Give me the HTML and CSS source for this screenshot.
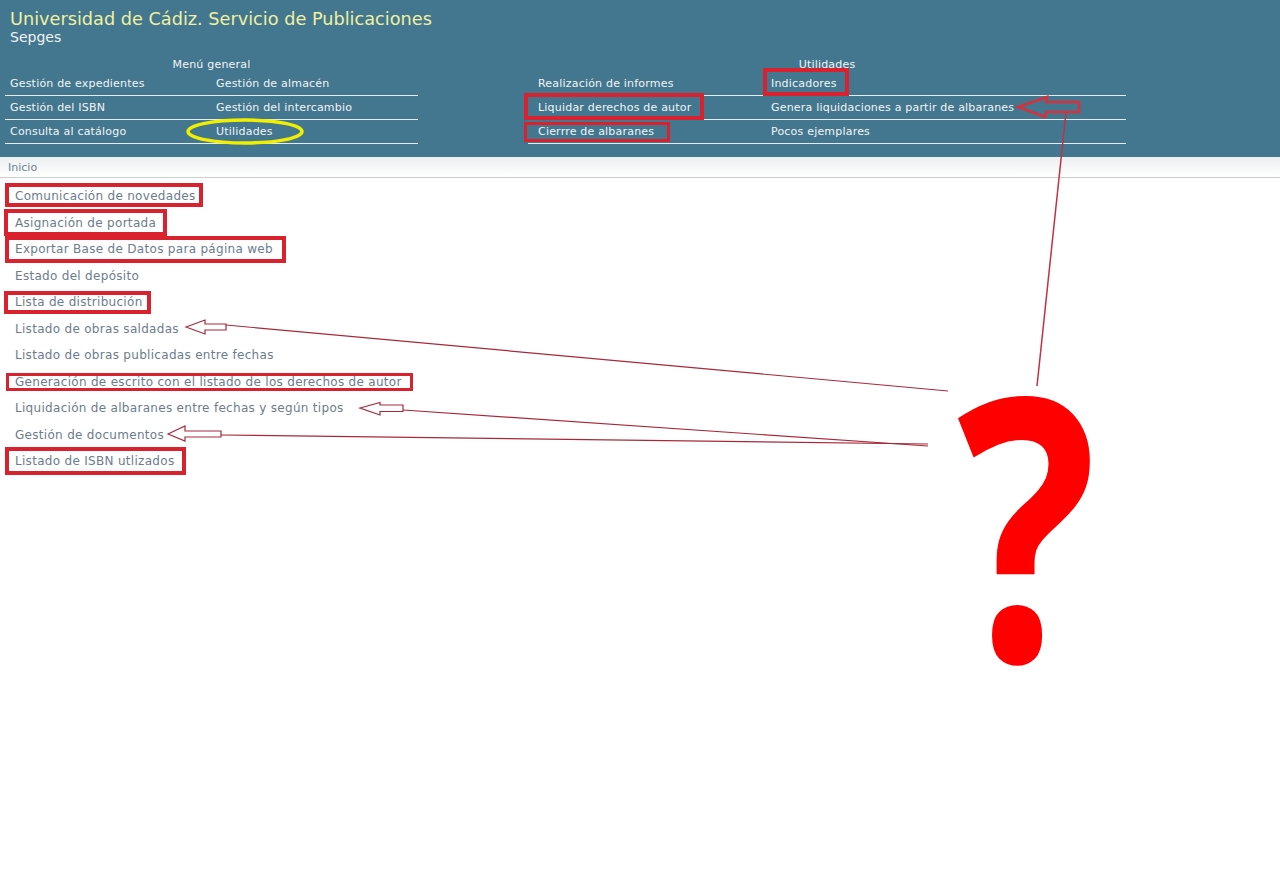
FILE: index.html
```html
<!DOCTYPE html>
<html lang="es">
<head>
<meta charset="utf-8">
<title>Sepges</title>
<link rel="stylesheet" href="styles.css">
</head>
<body>
<header class="top">
  <div class="title">Universidad de Cádiz. Servicio de Publicaciones</div>
  <div class="subtitle">Sepges</div>
  <div class="menus">
    <nav class="menu menu-left">
      <div class="menu-head">Menú general</div>
      <div class="cell">Gestión de expedientes</div>
      <div class="cell">Gestión de almacén</div>
      <div class="cell">Gestión del ISBN</div>
      <div class="cell">Gestión del intercambio</div>
      <div class="cell">Consulta al catálogo</div>
      <div class="cell">Utilidades</div>
    </nav>
    <nav class="menu menu-right">
      <div class="menu-head">Utilidades</div>
      <div class="cell">Realización de informes</div>
      <div class="cell">Indicadores</div>
      <div class="cell">Liquidar derechos de autor</div>
      <div class="cell">Genera liquidaciones a partir de albaranes</div>
      <div class="cell">Cierrre de albaranes</div>
      <div class="cell">Pocos ejemplares</div>
    </nav>
  </div>
</header>
<div class="crumb">Inicio</div>
<ul class="list">
  <li>Comunicación de novedades</li>
  <li>Asignación de portada</li>
  <li>Exportar Base de Datos para página web</li>
  <li>Estado del depósito</li>
  <li>Lista de distribución</li>
  <li>Listado de obras saldadas</li>
  <li>Listado de obras publicadas entre fechas</li>
  <li>Generación de escrito con el listado de los derechos de autor</li>
  <li>Liquidación de albaranes entre fechas y según tipos</li>
  <li>Gestión de documentos</li>
  <li>Listado de ISBN utlizados</li>
</ul>
<svg class="overlay" width="1280" height="886" viewBox="0 0 1280 886" xmlns="http://www.w3.org/2000/svg">
  <g fill="none" stroke="#d9222e" stroke-width="4">
    <rect x="7" y="185" width="194" height="20"/>
    <rect x="6" y="211" width="159" height="23"/>
    <rect x="7" y="238" width="277" height="23"/>
    <rect x="6" y="293" width="143" height="19"/>
    <rect x="7" y="449" width="177" height="24"/>
    <rect x="765" y="70" width="82" height="24"/>
    <rect x="526" y="95" width="176" height="23"/>
  </g>
  <g fill="none" stroke="#d9222e" stroke-width="3">
    <rect x="7.5" y="374.5" width="404" height="15"/>
    <rect x="525.5" y="123.5" width="143" height="17"/>
  </g>
  <ellipse cx="245" cy="131.5" rx="57" ry="11.5" fill="none" stroke="#f2ee00" stroke-width="3.5"/>
  <g fill="none" stroke="#a8283a" stroke-width="1.2">
    <polygon points="186,327 205,320 205,324 226,324 226,330 205,330 205,334"/>
    <line x1="226" y1="325" x2="948" y2="391"/>
    <polygon points="360,408 380,402.5 380,405 403,405 403,411.5 380,411.5 380,415"/>
    <line x1="403" y1="410" x2="928" y2="446"/>
    <polygon points="168,434 185,426 185,431 221,431 221,437 185,437 185,441"/>
    <line x1="221" y1="435" x2="928" y2="444"/>
  </g>
  <polygon points="1018,107 1047,97 1046,102 1079,102 1079,112 1046,112 1045,117" fill="none" stroke="#d8303c" stroke-width="2.5"/>
  <line x1="1066" y1="112" x2="1037" y2="386" stroke="#c43040" stroke-width="1.5"/>
  <circle cx="980" cy="433" r="1" fill="#3040c0"/>
  <text class="qmark" transform="translate(1027,661) scale(0.8,1)" x="0" y="0" text-anchor="middle">?</text>
</svg>
</body>
</html>
```
FILE: styles.css
```css
html, body {
  margin: 0;
  padding: 0;
}
body {
  position: relative;
  background: #ffffff;
  font-family: "DejaVu Sans", Verdana, sans-serif;
  width: 1280px;
  height: 886px;
  overflow: hidden;
}
.top {
  background: #42778f;
  padding: 9px 0 13px 0;
}
.title {
  color: #f0f0a0;
  font-size: 17.7px;
  line-height: 20px;
  padding-left: 10px;
}
.subtitle {
  color: #f2f2f2;
  font-size: 14px;
  line-height: 17px;
  padding-left: 10px;
}
.menus {
  display: flex;
  margin-top: 12px;
}
.menu {
  display: grid;
  font-size: 11px;
  letter-spacing: 0.2px;
  color: #f4f4f4;
}
.menu-left {
  margin-left: 5px;
  grid-template-columns: 206px 207px;
}
.menu-right {
  margin-left: 110px;
  grid-template-columns: 233px 365px;
}
.menu-head {
  grid-column: 1 / -1;
  text-align: center;
  line-height: 14px;
  height: 14px;
}
.cell {
  height: 23px;
  line-height: 23px;
  border-bottom: 1px solid #e4ecf0;
  white-space: nowrap;
}
.menu-left .cell {
  padding-left: 5px;
}
.menu-right .cell {
  padding-left: 10px;
}
.crumb {
  height: 20px;
  line-height: 22px;
  background: linear-gradient(#eceff0, #ffffff);
  border-bottom: 1px solid #cdcdcd;
  padding-left: 8px;
  font-size: 11px;
  color: #6a7f90;
}
.list {
  list-style: none;
  margin: 0;
  padding: 5px 0 0 15px;
  font-size: 12px;
  letter-spacing: 0.3px;
  color: #6b7c8e;
}
.list li {
  line-height: 26.5px;
  height: 26.5px;
}
.overlay {
  position: absolute;
  top: 0;
  left: 0;
  pointer-events: none;
}
.qmark {
  font-family: "Open Sans", sans-serif;
  font-weight: 700;
  font-size: 366px;
  fill: #ff0000;
}
```
